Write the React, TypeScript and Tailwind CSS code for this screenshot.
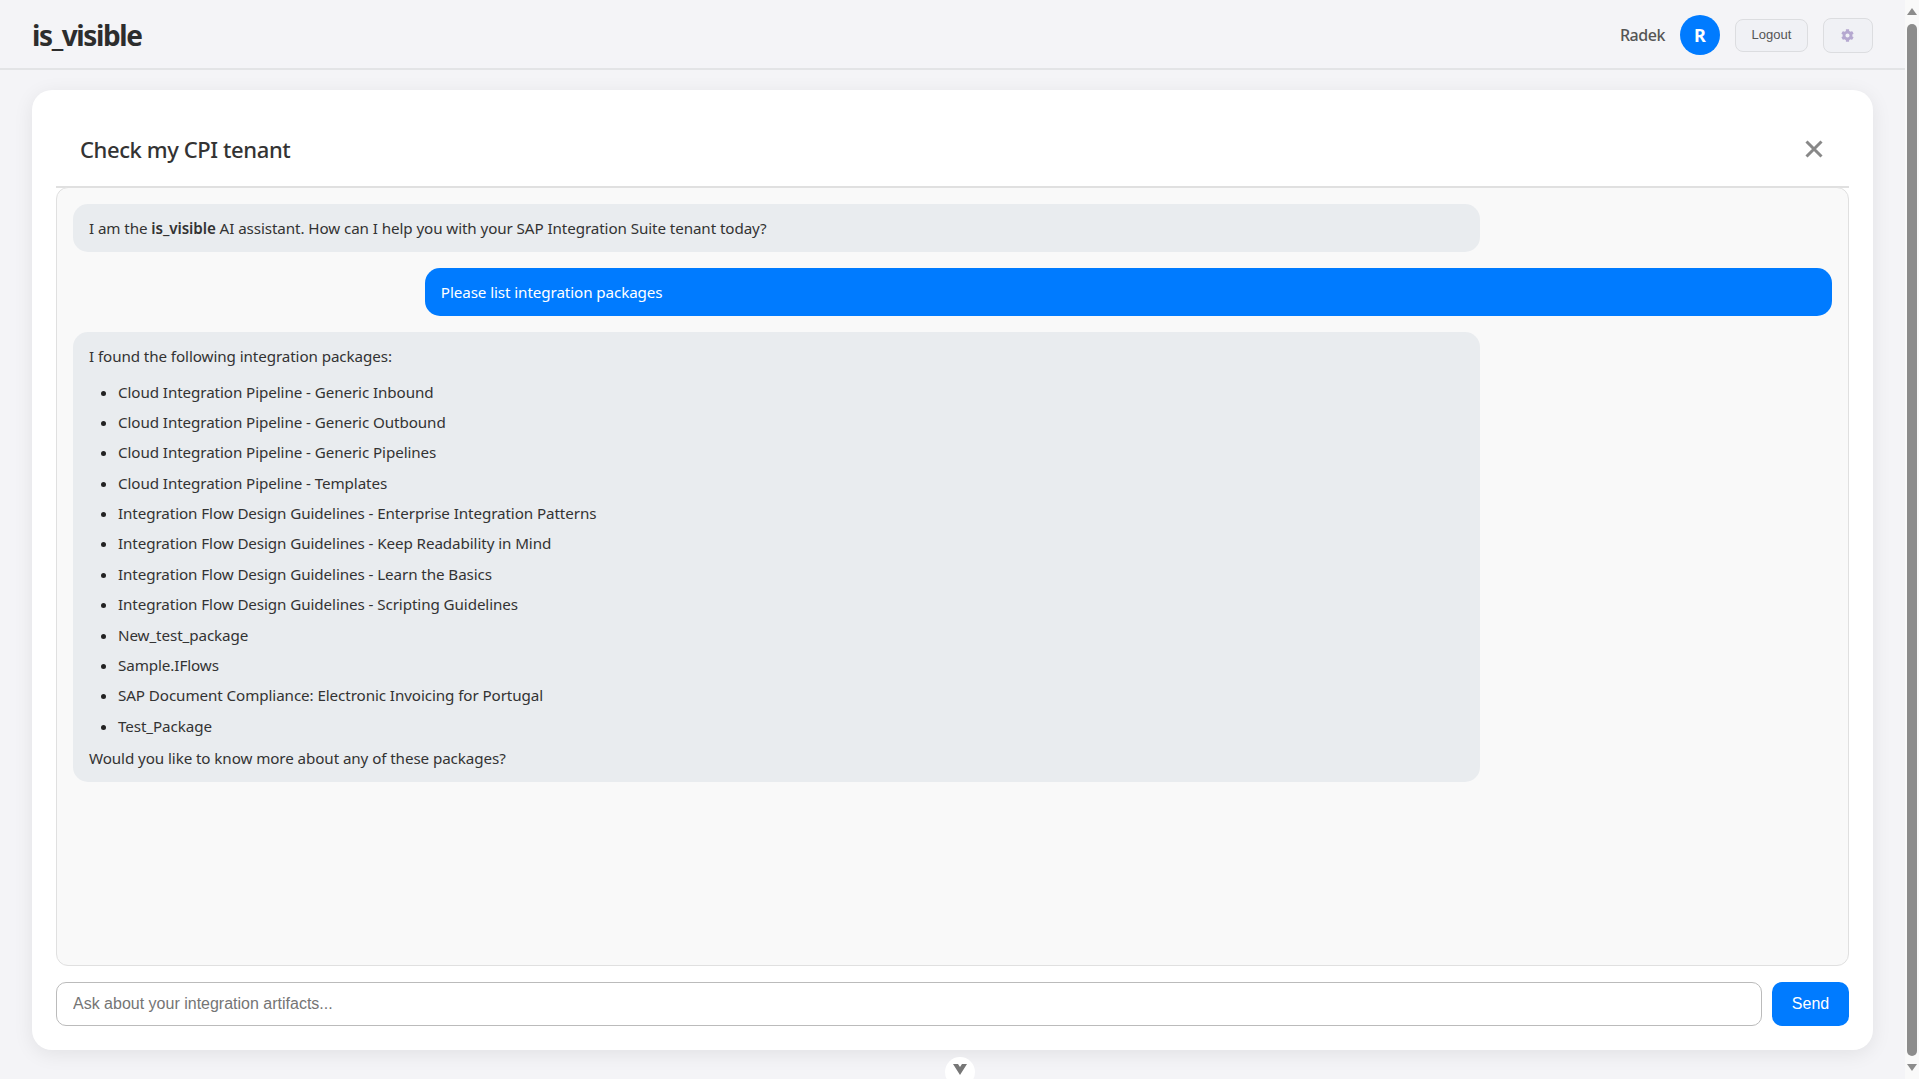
import { FaCog } from "react-icons/fa";

const sans = "font-['Noto_Sans','Open_Sans',sans-serif]";

const packages = [
  "Cloud Integration Pipeline - Generic Inbound",
  "Cloud Integration Pipeline - Generic Outbound",
  "Cloud Integration Pipeline - Generic Pipelines",
  "Cloud Integration Pipeline - Templates",
  "Integration Flow Design Guidelines - Enterprise Integration Patterns",
  "Integration Flow Design Guidelines - Keep Readability in Mind",
  "Integration Flow Design Guidelines - Learn the Basics",
  "Integration Flow Design Guidelines - Scripting Guidelines",
  "New_test_package",
  "Sample.IFlows",
  "SAP Document Compliance: Electronic Invoicing for Portugal",
  "Test_Package",
];

function Header() {
  return (
    <header className="h-[70px] shrink-0 flex items-center justify-between pl-8 pr-8 pt-[2px] border-b-2 border-[#e3e4e6]">
      <div className="text-[28px] font-bold tracking-[-1.4px] text-[#2d2d2d]">is_visible</div>
      <div className="flex items-center">
        <span className="text-[16px] font-medium tracking-[-0.45px] text-[#555555]">Radek</span>
        <div className="ml-[15px] w-10 h-10 rounded-full bg-[#007bff] text-white font-bold text-[18px] flex items-center justify-center">R</div>
        <button className="ml-[15px] w-[73px] h-[33px] rounded-lg border border-[#dcdde0] bg-[#f0f1f5] text-[#555555] text-[13px] font-['Liberation_Sans',sans-serif]">
          Logout
        </button>
        <button className="ml-[15px] w-[50px] h-[35px] pr-[1px] rounded-lg border border-[#dcdde0] bg-[#f0f1f5] flex items-center justify-center">
          <FaCog className="text-[13px] text-[#b5a8d0]" />
        </button>
      </div>
    </header>
  );
}

function Chat() {
  return (
    <div className="h-[779px] mx-6 shrink-0 rounded-xl border border-[#e0e0e0] bg-[#f9f9f9] p-4 flex flex-col gap-4 text-[15.2px] leading-[24px] tracking-[-0.09px] text-[#333333]">
      <div className="w-4/5 rounded-[15px] bg-[#e9ecef] px-4 py-3">
        I am the <strong className="font-semibold">is_visible</strong> AI assistant. How can I help you with your SAP Integration Suite tenant today?
      </div>
      <div className="w-4/5 self-end rounded-[15px] bg-[#007bff] text-white px-4 py-3">Please list integration packages</div>
      <div className="w-4/5 rounded-[15px] bg-[#e9ecef] px-4 py-3">
        <p className="mb-[11.5px]">I found the following integration packages:</p>
        <ul className="list-disc pl-[29px] mb-[8.2px] marker:text-[#222222]">
          {packages.map((name) => (
            <li key={name} className="mb-[6.4px]">{name}</li>
          ))}
        </ul>
        <p>Would you like to know more about any of these packages?</p>
      </div>
    </div>
  );
}

export default function App() {
  return (
    <div className={`h-[1079px] overflow-hidden flex bg-[#f4f4f7] ${sans}`}>
      <div className="flex-1 min-w-0 flex flex-col relative">
        <Header />
        <main className="mt-5 mx-8 h-[960px] shrink-0 rounded-[20px] bg-white shadow-[0_4px_20px_rgba(0,0,0,0.08)] flex flex-col">
          <div className="h-[96px] shrink-0 flex items-center justify-between pl-12 pr-[49px] pt-[22px]">
            <h2 className="text-[22px] font-medium tracking-[-0.4px] text-[#333333]">Check my CPI tenant</h2>
            <svg width="20" height="20" viewBox="0 0 20 20" className="text-[#888888]">
              <path d="M2.5 2.5L17.5 17.5M17.5 2.5L2.5 17.5" stroke="currentColor" strokeWidth="3" fill="none" />
            </svg>
          </div>
          <div className="mx-6 h-[2px] bg-[#e0e0e0] shrink-0 -mb-px" />
          <Chat />
          <div className="mx-6 mt-4 flex gap-[10px] font-['Liberation_Sans',sans-serif]">
            <input
              placeholder="Ask about your integration artifacts..."
              className="flex-1 h-11 rounded-[10px] border border-[#bbbbbb] bg-white px-4 text-[16px] placeholder:text-[#757575] outline-none"
            />
            <button className="w-[77px] h-11 rounded-[10px] bg-[#007bff] text-white text-[16px]">Send</button>
          </div>
        </main>
        <div className="absolute left-[945px] top-[1057px] w-[30px] h-[30px] rounded-full bg-white flex justify-center pt-[6px]">
          <svg width="14" height="12" viewBox="0 0 14 12">
            <path d="M0 1L14 1L7 12Z M5 1L7 4L9 1Z" fill="#777777" fillRule="evenodd" />
          </svg>
        </div>
      </div>
      <div className="w-[14px] shrink-0 bg-[#f9f9f9] flex flex-col items-center justify-between py-2">
        <div className="w-0 h-0 border-x-[5px] border-x-transparent border-b-[7px] border-b-[#8c8c8c]" />
        <div className="w-[10px] h-[1032px] rounded-full bg-[#8c8c8c]" />
        <div className="w-0 h-0 border-x-[5px] border-x-transparent border-t-[7px] border-t-[#8c8c8c]" />
      </div>
    </div>
  );
}
